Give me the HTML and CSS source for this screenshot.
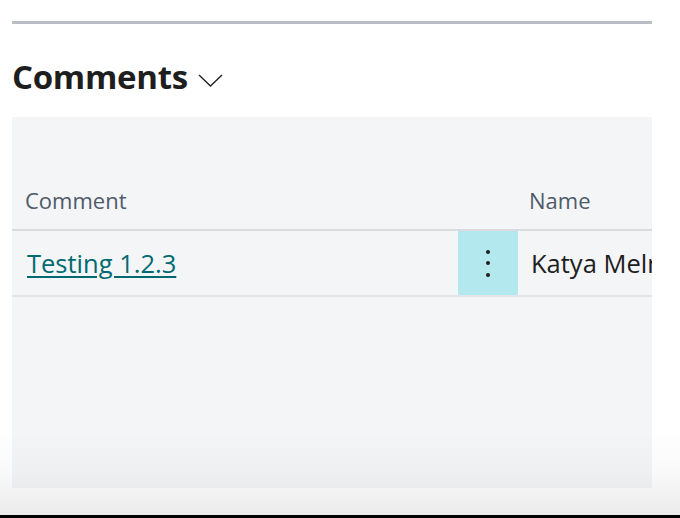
FILE: index.html
```html
<!DOCTYPE html>
<html>
<head>
<meta charset="utf-8">
<link rel="stylesheet" href="styles.css">
</head>
<body>
<div class="page">
  <div class="rule"></div>
  <h2 class="title">Comments<svg class="chev" width="25" height="13" viewBox="0 0 25 13"><path d="M1 1 L12.5 12 L24 1" fill="none" stroke="#222" stroke-width="1.4"/></svg></h2>
  <div class="panel">
    <div class="row head">
      <div class="cell c-comment">Comment</div>
      <div class="cell c-menu"></div>
      <div class="cell c-name">Name</div>
    </div>
    <div class="row body">
      <div class="cell c-comment"><a href="#" class="link">Testing 1.2.3</a></div>
      <div class="cell c-menu active"><span class="dots"><i></i><i></i><i></i></span></div>
      <div class="cell c-name">Katya Melnikova</div>
    </div>
  </div>
</div>
<div class="fade"></div>
<div class="bar"></div>
</body>
</html>
```

FILE: styles.css
```css
html, body {
  margin: 0;
  padding: 0;
  background: #ffffff;
  height: 518px;
  overflow: hidden;
  font-family: "Open Sans", "Noto Sans", sans-serif;
}
.page {
  padding: 21px 0 0 12px;
  width: 640px;
}
.rule {
  height: 3px;
  background: #b8bcc4;
}
.title {
  margin: 0;
  height: 93px;
  padding-top: 33px;
  box-sizing: border-box;
  font-size: 33px;
  line-height: 40px;
  font-weight: 700;
  color: #1e1e1e;
  letter-spacing: -0.3px;
  display: flex;
  align-items: flex-start;
}
.chev {
  margin-left: 10px;
  margin-top: 17px;
}
.panel {
  height: 371px;
  background: #f4f5f7;
  padding-top: 54px;
  box-sizing: border-box;
  overflow: hidden;
}
.row {
  display: flex;
  white-space: nowrap;
}
.row.head {
  height: 58px;
  border-bottom: 2px solid #d9dbdf;
  align-items: center;
  color: #4f5a6a;
  font-size: 22px;
}
.row.body {
  height: 64px;
  border-bottom: 2px solid #e3e4e7;
  font-size: 25.5px;
  color: #202020;
}
.cell {
  display: flex;
  align-items: center;
  overflow: hidden;
}
.c-comment {
  width: 446px;
  padding-left: 13px;
  box-sizing: border-box;
}
.row.body .c-comment { padding-left: 15px; }
.c-menu {
  width: 60px;
  justify-content: center;
}
.c-menu.active {
  background: #b2e8ee;
}
.c-name {
  flex: 1;
  padding-left: 11px;
}
.row.body .c-name { padding-left: 13px; }
.link {
  color: #006a70;
  text-decoration: underline;
  text-underline-offset: 3px;
  text-decoration-thickness: 1.5px;
}
.dots {
  display: flex;
  flex-direction: column;
  gap: 7.5px;
}
.dots i {
  display: block;
  width: 4px;
  height: 4px;
  border-radius: 50%;
  background: #1e1e1e;
}
.fade {
  position: absolute;
  left: 0;
  right: 0;
  top: 430px;
  height: 85px;
  background: linear-gradient(to bottom, rgba(0,0,0,0) 0%, rgba(0,0,0,0.025) 50%, rgba(0,0,0,0.08) 100%);
  pointer-events: none;
}
.bar {
  position: absolute;
  left: 0;
  right: 0;
  top: 515px;
  height: 3px;
  background: #000;
}
```
